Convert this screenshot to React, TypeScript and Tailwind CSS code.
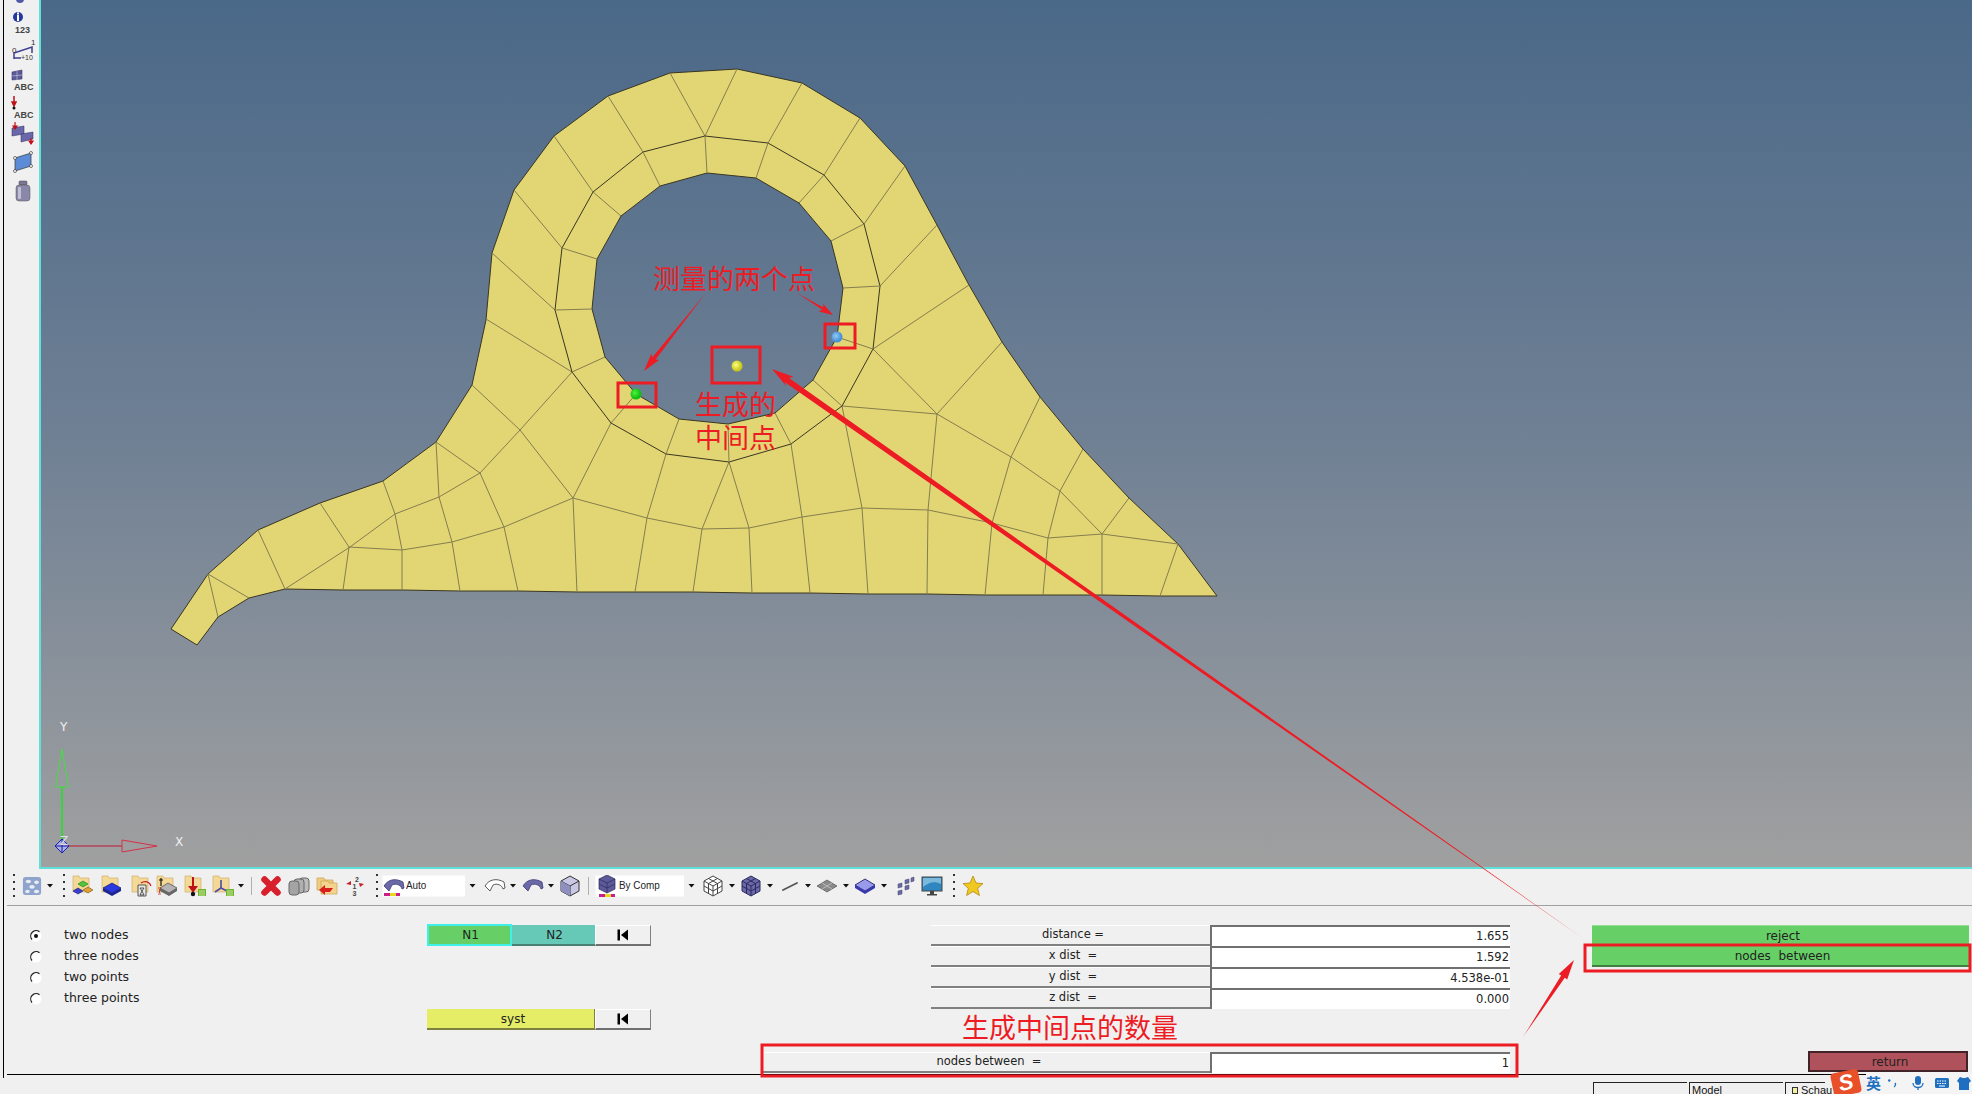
import React from 'react';

const outerPts = '670,73 737,69 802,83 860,118 905,166 937,225 969,285 1002,342 1040,397 1083,449 1129,498 1178,544 1217,596 1160,596 1102,595 1043,595 985,595 927,594 868,594 810,593 752,593 693,592 635,592 577,592 518,591 460,591 402,590 343,590 285,589 249,598 218,617 197,645 171,629 208,574 258,530 320,503 383,481 436,442 472,385 486,320 492,253 514,190 554,136 608,96';
const hole = [[707,173],[756,178],[799,203],[831,241],[843,288],[837,337],[813,380],[775,413],[728,424],[679,419],[636,394],[605,357],[592,309],[597,259],[621,216],[660,186]];
const ring = [[705,136],[768,143],[824,175],[864,224],[880,286],[873,349],[842,406],[791,444],[729,462],[666,454],[611,423],[572,372],[555,310],[562,248],[593,192],[643,152]];

const meshPath =
  'M' + outerPts.replace(/ /g, ' L') + ' Z M' + hole.map((p) => p.join(',')).join(' L') + ' Z';

const innerLines = [
  '705,136 670,73', '705,136 737,69', '768,143 802,83', '824,175 860,118', '864,224 905,166', '880,286 937,225', '873,349 969,285',
  '643,152 608,96', '593,192 554,136', '562,248 514,190', '555,310 492,253', '572,372 486,319',
  '572,372 520,430 480,473 439,497 395,514 350,547 285,589',
  '472,385 520,430 573,498', '611,423 573,498',
  '436,442 480,473 504,527 518,591', '436,442 439,497 452,542 460,591',
  '349,547 402,550 452,542 504,527 573,498 647,518 702,529 749,528 802,517 862,508 928,510 992,523 1048,538 1102,534 1178,544',
  '573,498 577,592', '666,454 647,518 635,592', '729,462 702,529 693,592', '729,462 749,528 752,593',
  '791,444 802,517 810,593', '842,406 862,508 868,594',
  '320,503 349,547 343,590', '383,481 395,514 402,550 402,590', '258,530 285,589', '208,574 218,617', '208,574 249,598',
  '873,349 937,414 1002,342', '842,406 937,414 1011,457 1060,491 1102,534 1129,498', '1011,457 1040,397', '1060,491 1083,449',
  '1060,491 1048,538 1043,595', '1011,457 992,523 985,595', '937,414 928,510 927,594', '1102,534 1102,595', '1178,544 1160,596',
];

const Ico = ({ className = '', children }: { className?: string; children: React.ReactNode }) => (
  <svg viewBox="0 0 22 22" className={`w-[22px] h-[22px] shrink-0 ${className}`}>
    {children}
  </svg>
);

const Caret = ({ className = '' }: { className?: string }) => (
  <svg viewBox="0 0 6 4" className={`w-[6px] h-[4px] shrink-0 ${className}`}>
    <path d="M0 0h6L3 3.5z" fill="#111" />
  </svg>
);

const Dots = ({ className = '' }: { className?: string }) => (
  <div className={`flex flex-col gap-[5px] w-[2px] shrink-0 ${className}`}>
    <div className="h-[2px] bg-[#333]" />
    <div className="h-[2px] bg-[#333]" />
    <div className="h-[2px] bg-[#333]" />
    <div className="h-[2px] bg-[#333]" />
  </div>
);

const Sep = ({ className = '' }: { className?: string }) => (
  <div className={`w-[1px] h-[18px] bg-[#b0b0b0] shrink-0 ${className}`} />
);

const Folder = () => <path d="M1 1h6l1 2h9v14H1z" fill="#f4d896" stroke="#d0b070" strokeWidth="0.7" />;
const GreenList = () => (
  <g>
    <rect x="14" y="14" width="8" height="7" fill="#6fb52c" />
    <path d="M15 16h6M15 18h6M15 20h6" stroke="#dff0c0" strokeWidth="0.8" />
  </g>
);
const SurfaceShape = ({ fill, stroke }: { fill: string; stroke: string }) => (
  <path d="M1 11C5 4 13 3 20 7l1 6-2 1c-1-4-6-6-10-4l-3 6z" fill={fill} stroke={stroke} strokeWidth="0.8" />
);
const Cube = ({ fill, line }: { fill: string; line: string }) => (
  <g stroke={line} strokeWidth="1" strokeLinejoin="round">
    <path d="M11 1l9 5v10l-9 5-9-5V6z" fill={fill} />
    <path d="M2 6l9 5 9-5M11 11v10M6.500 3.500l9 5v10M15.500 3.500l-9 5v10M2 11l9 5 9-5" fill="none" />
  </g>
);

const Combo = ({ label, icon }: { label: string; icon: React.ReactNode }) => (
  <div className="flex items-center h-[22px] bg-white border border-[#f8f8f8] shrink-0">
    {icon}
    <span className="ml-[1px] text-[11px] font-['Liberation_Sans',sans-serif] text-[#222] scale-x-90 origin-left whitespace-nowrap">{label}</span>
  </div>
);

const Toolbar = () => (
  <div className="flex items-center h-[37px] ml-[3px] pb-[3px] border-b border-[#a0a0a0]">
    <Dots className="ml-[6px]" />
    <Ico className="ml-[7px] !w-[20px]">
      <rect x="1" y="1" width="20" height="20" rx="3" fill="#8ea4cc" />
      <ellipse cx="7" cy="6" rx="3" ry="2" fill="#e8ecf4" />
      <ellipse cx="16" cy="7" rx="2.500" ry="2" fill="#e8ecf4" />
      <ellipse cx="11" cy="12" rx="3" ry="2" fill="#e8ecf4" />
      <ellipse cx="6" cy="17" rx="2.500" ry="2" fill="#e8ecf4" />
      <ellipse cx="16" cy="17" rx="3" ry="2" fill="#e8ecf4" />
    </Ico>
    <Caret className="ml-[5px]" />
    <Dots className="ml-[10px]" />
    <Ico className="ml-[7px]">
      <Folder />
      <path d="M11 6l5 3-5 3-5-3z" fill="#4fc43c" stroke="#1d7a18" strokeWidth="0.6" />
      <path d="M6 13l5 3-5 3-5-3z" fill="#3a3fd0" stroke="#16186c" strokeWidth="0.6" />
      <path d="M16 12l5 3-5 3-5-3z" fill="#e0a038" stroke="#7a5210" strokeWidth="0.6" />
    </Ico>
    <Ico className="ml-[7px]">
      <Folder />
      <path d="M11 8l9 5-9 5-9-5z" fill="#2a3ae0" stroke="#10186c" strokeWidth="0.7" />
      <path d="M2 13v3l9 5 9-5v-3l-9 5z" fill="#1a2496" />
    </Ico>
    <Ico className="ml-[8px]">
      <Folder />
      <path d="M7 21V10h8v11zM9 13h4l-2 3zM9 20l2-4 2 4z" fill="#e8e8e8" stroke="#333" strokeWidth="0.8" />
      <path d="M10 8c4-3 9-1 10 3" fill="none" stroke="#c8202a" strokeWidth="1.200" />
    </Ico>
    <Ico className="ml-[3px]">
      <Folder />
      <path d="M12 8l9 5-8 5-9-5z" fill="#b4b4b4" stroke="#444" strokeWidth="0.7" />
      <path d="M4 13v3l9 5 8-5v-3l-8 5z" fill="#666" />
      <path d="M5 3v8M3 5h4" stroke="#111" strokeWidth="1.200" />
      <path d="M2 13h3M2 19h3M3.500 14v4" stroke="#c8202a" strokeWidth="0.8" />
    </Ico>
    <Ico className="ml-[6px]">
      <Folder />
      <path d="M9 2v12M6 12l3 4 3-4z" stroke="#c01018" strokeWidth="2" fill="#c01018" />
      <circle cx="9" cy="19" r="2.200" fill="#111" />
      <GreenList />
    </Ico>
    <Ico className="ml-[6px]">
      <Folder />
      <path d="M9 5v8l-6 4M9 13l6 3" stroke="#4a4aa8" strokeWidth="1.600" fill="none" />
      <GreenList />
    </Ico>
    <Caret className="ml-[4px]" />
    <Sep className="ml-[7px]" />
    <Ico className="ml-[8px]">
      <path d="M4.500 4.500l13 13M17.500 4.500l-13 13" stroke="#d81f2c" strokeWidth="6.500" strokeLinecap="round" />
    </Ico>
    <Ico className="ml-[6px]">
      <rect x="11" y="3" width="10" height="14" rx="3" fill="#bcbcbc" stroke="#666" />
      <rect x="6" y="4" width="10" height="14" rx="3" fill="#b0b0b0" stroke="#666" />
      <rect x="1" y="6" width="10" height="14" rx="3" fill="#a4a4a4" stroke="#666" />
    </Ico>
    <Ico className="ml-[6px]">
      <path d="M1 3h7l1 2h8v10H1z" fill="#f0cd80" stroke="#c9a050" strokeWidth="0.7" />
      <path d="M5 6h7l1 2h8v11H5z" fill="#f4d48c" stroke="#c9a050" strokeWidth="0.7" />
      <path d="M17 13H9V10l-6 5 6 5v-3h5z" fill="#d8201c" />
    </Ico>
    <Ico className="ml-[6px]">
      <text x="11" y="7" fontSize="7" fontWeight="700" fill="#444" fontFamily="'Liberation Sans', sans-serif">2</text>
      <text x="8.500" y="14" fontSize="7" fontWeight="700" fill="#444" fontFamily="'Liberation Sans', sans-serif">1</text>
      <text x="8.500" y="21" fontSize="7" fontWeight="700" fill="#444" fontFamily="'Liberation Sans', sans-serif">3</text>
      <path d="M7 6L2 9l5 1zM15 8l5 1-4 3z" fill="#c8202a" />
    </Ico>
    <Dots className="ml-[10px]" />
    <div className="ml-[4px] w-[98px] relative shrink-0">
      <Combo
        label="Auto"
        icon={
          <Ico>
            <SurfaceShape fill="#6a68a8" stroke="#3c3a70" />
            <rect x="1" y="18" width="16" height="3" fill="#c82088" />
            <rect x="7" y="18" width="6" height="3" fill="#e8d820" />
          </Ico>
        }
      />
      <div className="absolute right-0 top-0 w-[15px] h-[22px] bg-[#f0f0f0] flex items-center justify-center">
        <Caret className="!w-[7px]" />
      </div>
    </div>
    <Ico className="ml-[4px]">
      <SurfaceShape fill="#fff" stroke="#333" />
    </Ico>
    <Caret className="ml-[4px]" />
    <Ico className="ml-[6px]">
      <SurfaceShape fill="#6a68a8" stroke="#3c3a70" />
    </Ico>
    <Caret className="ml-[4px]" />
    <Ico className="ml-[5px]">
      <path d="M11 1l9 5v10l-9 5-9-5V6z" fill="#c8c8e4" stroke="#333" />
      <path d="M2 6l9 5 9-5M11 11v10" fill="none" stroke="#333" />
      <path d="M2 6l9 5v10l-9-5z" fill="#9090c0" />
    </Ico>
    <Sep className="ml-[7px]" />
    <div className="ml-[6px] w-[104px] relative shrink-0">
      <Combo
        label="By Comp"
        icon={
          <Ico>
            <path d="M11 0l8 4v10l-8 4-8-4V4z" fill="#5c5a98" stroke="#2c2a5c" strokeWidth="0.7" />
            <path d="M3 4l8 4 8-4M11 8v10M3 9l8 4 8-4" stroke="#2c2a5c" strokeWidth="0.7" fill="none" />
            <rect x="3" y="19" width="16" height="3" fill="#c82088" />
            <rect x="9" y="19" width="6" height="3" fill="#e8d820" />
          </Ico>
        }
      />
      <div className="absolute right-0 top-0 w-[15px] h-[22px] bg-[#f0f0f0] flex items-center justify-center">
        <Caret className="!w-[7px]" />
      </div>
    </div>
    <Ico className="ml-[3px]">
      <Cube fill="#fff" line="#444" />
    </Ico>
    <Caret className="ml-[5px]" />
    <Ico className="ml-[5px]">
      <Cube fill="#6a68a8" line="#2c2a5c" />
    </Ico>
    <Caret className="ml-[5px]" />
    <Ico className="ml-[6px]">
      <path d="M4 15l14-7" stroke="#555" strokeWidth="1.800" strokeLinecap="round" />
    </Ico>
    <Caret className="ml-[4px]" />
    <Ico className="ml-[5px]">
      <path d="M11 5l10 6-10 6L1 11z" fill="#8a8a8a" stroke="#555" strokeWidth="0.7" />
      <path d="M6 8l10 6M16 8L6 14" stroke="#d0d0d0" strokeWidth="0.7" />
    </Ico>
    <Caret className="ml-[5px]" />
    <Ico className="ml-[5px]">
      <path d="M11 4l10 6-10 6L1 10z" fill="#9a9aec" stroke="#22226c" strokeWidth="0.9" />
      <path d="M1 10v3l10 6 10-6v-3l-10 6z" fill="#3838b0" />
    </Ico>
    <Caret className="ml-[5px]" />
    <Ico className="ml-[6px]">
      <path d="M12 5l4-1v4l-4 1zM18 3l3-1v4l-3 1zM5 9l4-1v4l-4 1zM12 11l4-1v4l-4 1zM5 16l4-1v4l-4 1z" fill="#6a6aa0" stroke="#44447a" strokeWidth="0.5" />
    </Ico>
    <Ico className="ml-[6px]">
      <rect x="1" y="2" width="20" height="14" fill="#2f86c0" stroke="#444" />
      <path d="M2 3h18v6C14 6 8 7 2 12z" fill="#7ab8dc" />
      <path d="M9 16h4v3h3v1.500H6V19h3z" fill="#444" />
    </Ico>
    <Dots className="ml-[10px]" />
    <Ico className="ml-[7px]">
      <path d="M11 1l3 7 7 .6-5.300 4.700 1.700 7.200L11 16.500 4.600 20.500l1.700-7.200L1 8.600 8 8z" fill="#f0c820" stroke="#b08a10" strokeWidth="0.8" />
    </Ico>
  </div>
);

const Radio = ({ on, label }: { on?: boolean; label: string }) => (
  <div className="flex items-center h-[21px]">
    <svg viewBox="0 0 14 14" className="w-[14px] h-[14px] shrink-0">
      <circle cx="7" cy="7" r="5.500" fill="#fff" />
      <path d="M10.500 2.800A5.400 5.400 0 0 0 3 10.500" fill="none" stroke="#222" strokeWidth="1.200" />
      {on && <circle cx="7" cy="7" r="2" fill="#111" />}
    </svg>
    <span className="ml-[21px] whitespace-nowrap">{label}</span>
  </div>
);

const SkipBtn = () => (
  <div className="flex items-center justify-center w-[56px] h-[21px] bg-[#f0f0f0] border-t border-l border-white border-r border-r-[#808080] border-b-2 border-b-[#707070]">
    <svg viewBox="0 0 12 12" className="w-[12px] h-[12px]">
      <rect x="0.500" y="0.500" width="2.500" height="11" fill="#000" />
      <path d="M11 0.500v11L4 6z" fill="#000" />
    </svg>
  </div>
);

const Row = ({ label, value, wide }: { label: string; value: string; wide?: boolean }) => (
  <div className="flex justify-end h-[21px] text-[11.500px]">
    <div className={`${wide ? 'w-[447px]' : 'w-[279px]'} flex items-center justify-center pl-[5px] whitespace-pre border-t border-white border-b-2 border-b-[#808080]`}>
      {label}
    </div>
    <div className="w-[300px] flex items-center justify-end pr-[1px] bg-white border-t-2 border-l-2 border-[#707070]">
      {value}
    </div>
  </div>
);

export default function App() {
  return (
    <div className="relative flex w-[1972px] h-[1094px] overflow-hidden bg-[#f0f0f0] text-[12px] text-[#222] font-['DejaVu_Sans',sans-serif]">
      <div className="w-[4px] h-[1078px] border-r border-black shrink-0" />
      <div className="flex flex-col w-[1968px]">
        <div className="flex h-[869px]">
          {/* left model toolbar */}
          <div className="w-[35px] flex flex-col items-center shrink-0 font-['Liberation_Sans',sans-serif] font-bold text-[#444]">
            <svg viewBox="0 0 35 220" className="w-[35px] h-[220px]">
              <circle cx="16" cy="-1" r="4" fill="#5058a8" />
              <circle cx="14" cy="17" r="5" fill="#2438a0" />
              <rect x="13" y="15" width="2" height="6" fill="#fff" />
              <rect x="13" y="12.500" width="2" height="2" fill="#fff" />
              <text x="11" y="33" fontSize="9" fontWeight="700" fill="#444">123</text>
              <path d="M10 59V53l18-6v6" fill="none" stroke="#3c3c90" strokeWidth="1.500" />
              <path d="M10 58h7" stroke="#3c3c90" strokeWidth="1.500" />
              <text x="8" y="53" fontSize="8" fontWeight="400" fill="#333">0</text>
              <text x="27" y="45" fontSize="8" fontWeight="400" fill="#333">1</text>
              <text x="17" y="60" fontSize="7" fontWeight="400" fill="#333">+10</text>
              <path d="M8 72l10-2v9l-10 1z" fill="#5c5a98" stroke="#2c2a5c" strokeWidth="0.5" />
              <path d="M13 71v9M8 76l10-1" stroke="#d0d0e8" strokeWidth="0.6" />
              <text x="10" y="90" fontSize="9" fontWeight="700" fill="#444">ABC</text>
              <path d="M10 96v8M8 102l2 4 2-4z" stroke="#c01018" strokeWidth="1.500" fill="#c01018" />
              <circle cx="10" cy="108" r="1.500" fill="#111" />
              <text x="10" y="118" fontSize="9" fontWeight="700" fill="#444">ABC</text>
              <path d="M8 128l12-2v8l-12 2z" fill="#6a68a8" stroke="#2c2a5c" strokeWidth="0.5" />
              <path d="M17 134l12-2v7l-12 3z" fill="#6a68a8" stroke="#2c2a5c" strokeWidth="0.5" />
              <path d="M11 122v6M9 126l2 3 2-3z" stroke="#c01018" strokeWidth="1.200" fill="#c01018" />
              <path d="M27 138v4M25 141l2 3 2-3z" stroke="#c01018" strokeWidth="1.200" fill="#c01018" />
              <path d="M11 158l16-5v13l-16 5z" fill="#5c8cd8" stroke="#333" strokeWidth="0.7" />
              <circle cx="11" cy="158" r="1.500" fill="#fff" stroke="#222" strokeWidth="0.6" />
              <circle cx="27" cy="153" r="1.500" fill="#fff" stroke="#222" strokeWidth="0.6" />
              <circle cx="27" cy="166" r="1.500" fill="#fff" stroke="#222" strokeWidth="0.6" />
              <circle cx="11" cy="171" r="1.500" fill="#fff" stroke="#222" strokeWidth="0.6" />
              <rect x="15" y="181" width="8" height="4" rx="1" fill="#7a7896" stroke="#444" strokeWidth="0.5" />
              <rect x="12" y="185" width="14" height="16" rx="3" fill="#8a88a8" stroke="#555" strokeWidth="0.5" />
              <rect x="14" y="187" width="3" height="12" rx="1" fill="#c0c0d4" />
            </svg>
          </div>

          {/* graphics area */}
          <div className="relative w-[1933px] border-l-2 border-b-2 border-[#5fe0d8] bg-gradient-to-b from-[#4a6888] via-[#6f8094] to-[#a0a0a0]">
            <svg viewBox="41 0 1931 867" className="absolute inset-0 w-[1931px] h-[867px]">
              <path d={meshPath} fill="#e2d574" fillRule="evenodd" stroke="#3a3620" strokeWidth="1" />
              {innerLines.map((p) => (
                <polyline key={p} points={p} fill="none" stroke="#857e4e" strokeWidth="1" />
              ))}
              <polygon points={ring.map((p) => p.join(',')).join(' ')} fill="none" stroke="#3a3620" strokeWidth="1" />
              {hole.map((p, i) => (
                <line key={i} x1={p[0]} y1={p[1]} x2={ring[i][0]} y2={ring[i][1]} stroke="#857e4e" strokeWidth="1" />
              ))}
              <defs>
                <radialGradient id="ng" cx="0.400" cy="0.400"><stop offset="0" stopColor="#50f040" /><stop offset="1" stopColor="#10c010" /></radialGradient>
                <radialGradient id="nb" cx="0.400" cy="0.400"><stop offset="0" stopColor="#90ccf4" /><stop offset="1" stopColor="#4a90d8" /></radialGradient>
                <radialGradient id="ny" cx="0.400" cy="0.400"><stop offset="0" stopColor="#ffff80" /><stop offset="1" stopColor="#c8c820" /></radialGradient>
              </defs>
              <circle cx="636" cy="394" r="5.500" fill="url(#ng)" />
              <circle cx="837" cy="337" r="5.500" fill="url(#nb)" />
              <circle cx="737" cy="366" r="5.500" fill="url(#ny)" />

              {/* global triad */}
              <path d="M55.500 787h13L62 749z" fill="none" stroke="#40e040" strokeWidth="1" />
              <path d="M62 840V787" stroke="#18e818" strokeWidth="1.500" />
              <path d="M68 846H122" stroke="#c01838" strokeWidth="1.200" />
              <path d="M122 840v12l35-6z" fill="none" stroke="#d83048" strokeWidth="1" />
              <path d="M55 846l7-7 7 7-7 7z" fill="#a8b0e0" stroke="#2020c0" strokeWidth="1" />
              <path d="M62 839v14M55 846h14" stroke="#1818a0" strokeWidth="1" />
              <text x="60" y="731" fontSize="12" fill="#f0f0f0" fontFamily="'DejaVu Sans', sans-serif">Y</text>
              <text x="175" y="846" fontSize="12" fill="#f0f0f0" fontFamily="'DejaVu Sans', sans-serif">X</text>
              <text x="60" y="845" fontSize="12" fill="#e0e0e0" fontFamily="'DejaVu Sans', sans-serif">Z</text>
            </svg>
          </div>
        </div>

        <Toolbar />

        {/* bottom panel */}
        <div className="flex h-[169px] ml-[3px] pt-[19px] border-b border-black">
          <div className="ml-[22px] w-[398px] shrink-0 flex flex-col text-[12.500px]">
            <Radio on label="two nodes" />
            <Radio label="three nodes" />
            <Radio label="two points" />
            <Radio label="three points" />
          </div>
          <div className="w-[224px] shrink-0 flex flex-col">
            <div className="flex">
              <div className="w-[85px] h-[22px] -mt-[1px] flex items-center justify-center pl-[2px] bg-[#66d066] border-2 border-[#40f0e8]">N1</div>
              <div className="w-[83px] h-[21px] flex items-center justify-center pl-[2px] bg-[#66c9b8] border-b-2 border-[#4a7f74]">N2</div>
              <SkipBtn />
            </div>
            <div className="flex mt-[63px]">
              <div className="w-[168px] h-[21px] flex items-center justify-center pl-[5px] bg-[#e5ed66] border-b-2 border-r border-[#7f8040]">syst</div>
              <SkipBtn />
            </div>
          </div>
          <div className="ml-[112px] w-[747px] shrink-0 flex flex-col">
            <Row label="distance =" value="1.655" />
            <Row label="x dist  =" value="1.592" />
            <Row label="y dist  =" value="4.538e-01" />
            <Row label="z dist  =" value="0.000" />
            <div className="mt-[43px]">
              <Row wide label="nodes between  =" value="1" />
            </div>
          </div>
          <div className="ml-[82px] w-[377px] shrink-0 flex flex-col">
            <div className="h-[21px] flex items-center justify-center pl-[5px] bg-[#66d066] border-t border-[#90e090]">reject</div>
            <div className="h-[21px] flex items-center justify-center pl-[4px] bg-[#66d066] border-b-2 border-[#3f7f3f] whitespace-pre">nodes  between</div>
            <div className="self-end w-[160px] h-[21px] mt-[84px] mr-[1px] flex items-center justify-center pl-[4px] bg-[#b0525c] border-2 border-[#40242a]">return</div>
          </div>
        </div>

        {/* status strip */}
        <div className="flex flex-1 items-end text-[11px] font-['Liberation_Sans',sans-serif] text-[#111] overflow-hidden">
          <div className="ml-[1589px] w-[94px] h-[12px] border-t border-l border-[#222]" />
          <div className="ml-[2px] w-[94px] h-[12px] border-t border-l border-[#222] pl-[2px] leading-[14px]">Model</div>
          <div className="ml-[2px] w-[40px] h-[12px] border-t border-l border-[#222] pl-[6px] flex items-start leading-[14px] whitespace-nowrap">
            <span className="w-[6px] h-[7px] mt-[4px] mr-[3px] bg-[#f0f0a0] border border-[#333] shrink-0" />
            Schau
          </div>
        </div>
      </div>

      {/* sogou ime tray, floats over the status strip */}
      <div className="absolute left-[1832px] top-[1072px] w-[140px] h-[22px] flex items-center">
        <div className="w-[28px] h-[24px] -rotate-12 rounded-[4px] bg-[#e8502a] flex items-center justify-center text-white font-['Liberation_Sans',sans-serif] font-bold italic text-[22px] leading-none">S</div>
        <div className="ml-[6px] w-[106px] h-[22px] flex items-center bg-[#f4f4f4] text-[#1f6fc0] font-bold text-[15px] font-['Noto_Sans_CJK_SC',sans-serif]">
          <span>英</span>
          <svg viewBox="0 0 16 16" className="ml-[5px] w-[16px] h-[16px]">
            <circle cx="4" cy="5" r="1.500" fill="#1f6fc0" />
            <path d="M11 8c1 1 1 3-1 5" fill="none" stroke="#1f6fc0" strokeWidth="1.500" />
          </svg>
          <svg viewBox="0 0 16 16" className="ml-[11px] w-[16px] h-[16px] shrink-0">
            <rect x="5" y="1" width="6" height="9" rx="3" fill="#1f6fc0" />
            <path d="M3 8c0 6 10 6 10 0M8 12v3" fill="none" stroke="#1f6fc0" strokeWidth="1.300" />
          </svg>
          <svg viewBox="0 0 16 16" className="ml-[8px] w-[16px] h-[16px] shrink-0">
            <rect x="1" y="3" width="14" height="10" rx="1.500" fill="#1f6fc0" />
            <path d="M3 6h10M3 8.500h10" stroke="#fff" strokeWidth="1" strokeDasharray="1.500 1" />
            <path d="M5 11h6" stroke="#fff" strokeWidth="1" />
          </svg>
          <svg viewBox="0 0 16 16" className="ml-[6px] w-[16px] h-[16px] shrink-0">
            <path d="M4 2l3 1h2l3-1 3 4-2 2v7H3V8L1 6z" fill="#1f6fc0" />
          </svg>
        </div>
      </div>

      {/* red annotations on top of everything */}
      <svg viewBox="0 0 1972 1094" className="absolute inset-0 w-[1972px] h-[1094px] pointer-events-none">
        <g fill="none" stroke="#ed1c24" strokeWidth="3">
          <rect x="618" y="383" width="38" height="24" />
          <rect x="712" y="347" width="48" height="36" />
          <rect x="825" y="324" width="30" height="24" />
          <rect x="762" y="1045" width="755" height="31" />
          <rect x="1585" y="945" width="385" height="26" />
        </g>
        <g fill="#ed1c24">
          <polygon points="772,369 793.400,376.700 789,378 1584,939 784.500,382 786.600,386.500" />
          <polygon points="1574,960 1567.200,979.500 1564.800,977.800 1523,1037 1561.200,975.600 1558.800,973.900" />
          <polygon points="644,371 659.100,360 655.600,359.600 705,294 652.400,357.200 651.300,353.800" />
          <polygon points="833,315 818.700,311.500 822.300,309.800 797,293 823.300,307.600 823.300,303.900" />
        </g>
      </svg>
      <div className="absolute left-[653px] top-[260px] text-[27px] leading-[36px] text-[#ed1c24] font-['Noto_Sans_CJK_SC',sans-serif] whitespace-nowrap">测量的两个点</div>
      <div className="absolute left-[695px] top-[387px] text-[27px] leading-[33px] text-[#ed1c24] font-['Noto_Sans_CJK_SC',sans-serif] whitespace-nowrap">
        生成的
        <br />
        中间点
      </div>
      <div className="absolute left-[962px] top-[1009px] text-[27px] leading-[36px] text-[#ed1c24] font-['Noto_Sans_CJK_SC',sans-serif] whitespace-nowrap">生成中间点的数量</div>
    </div>
  );
}
